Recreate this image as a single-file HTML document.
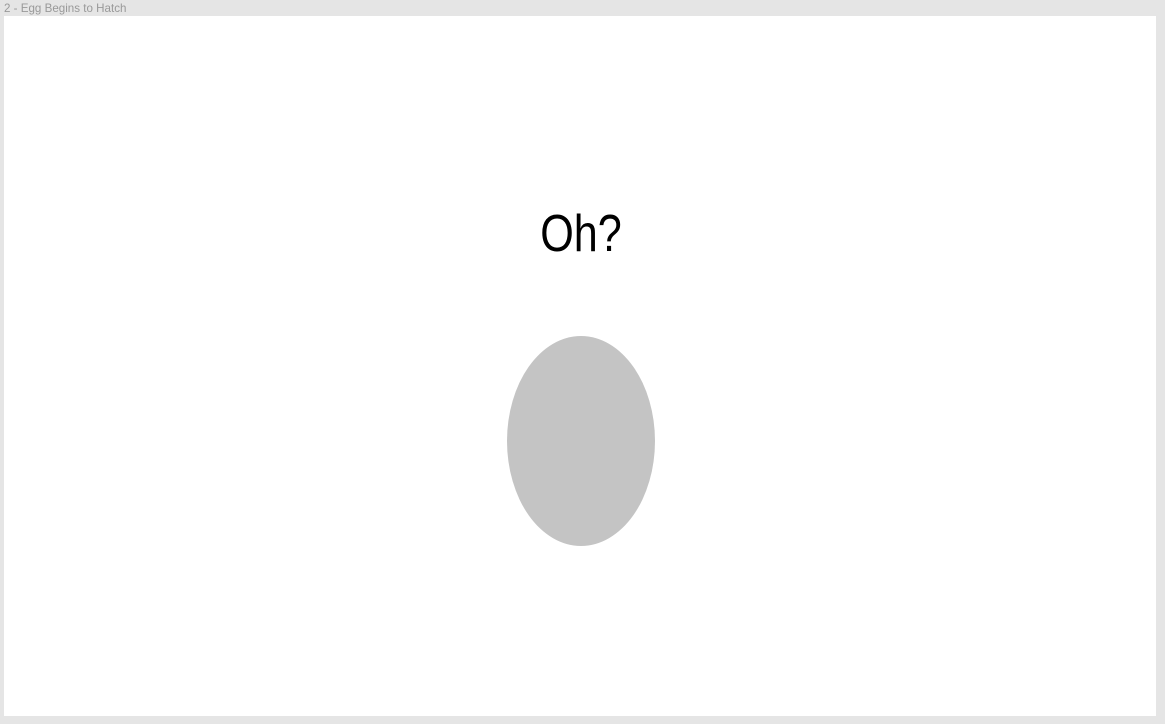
<!DOCTYPE html>
<html><head><style>
html,body{margin:0;padding:0;}
body{width:1165px;height:724px;background:#e5e5e5;position:relative;overflow:hidden;font-family:"Liberation Sans",sans-serif;}
.lbl{position:absolute;left:4px;top:2px;font-size:11.6px;color:#999;}
.frame{position:absolute;left:4px;top:16px;width:1152px;height:700px;background:#fff;}
.t{position:absolute;left:0;width:1162px;top:204px;text-align:center;font-size:52px;color:#000;line-height:60px;transform:scaleX(0.83);transform-origin:581px 0;}
.egg{position:absolute;left:507px;top:336px;width:148px;height:210px;border-radius:50%;background:#c4c4c4;}
</style></head><body>
<div class="lbl">2 - Egg Begins to Hatch</div>
<div class="frame"></div>
<div class="t">Oh?</div>
<div class="egg"></div>
</body></html>
